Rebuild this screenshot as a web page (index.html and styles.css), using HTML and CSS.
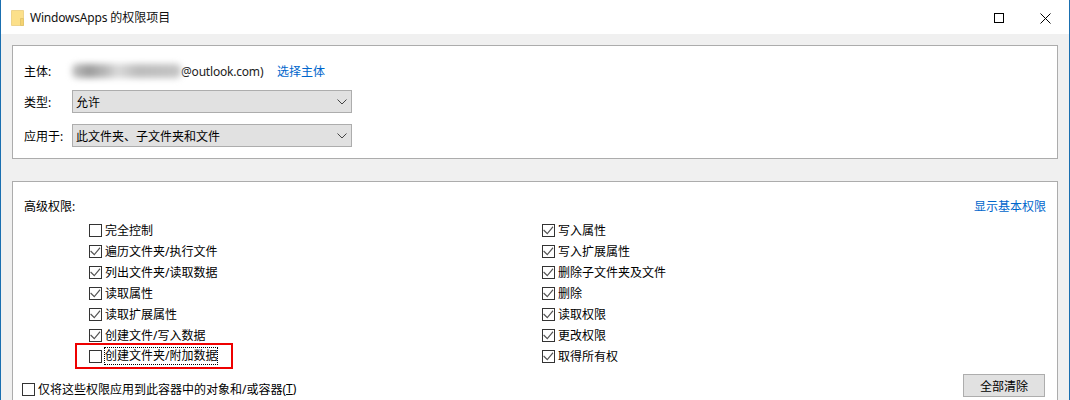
FILE: index.html
```html
<!DOCTYPE html>
<html lang="zh-CN">
<head>
<meta charset="utf-8">
<title>WindowsApps 的权限项目</title>
<link rel="stylesheet" href="styles.css">
</head>
<body>
<div class="window">
  <header class="titlebar">
    <svg class="folder" width="13" height="16" viewBox="0 0 13 16">
      <path d="M0.5 0.5H12.5V15.5H0.5Z" fill="#fce08a" stroke="#eed48c"/>
      <path d="M9.5 8.5H12.5V15.5H9.5Z" fill="#f5d372" stroke="#e4c76e"/>
    </svg>
    <span class="title"><span class="latin">WindowsApps</span> 的权限项目</span>
    <svg class="winbtn maximize" width="10" height="10" viewBox="0 0 10 10"><rect x="0.5" y="0.5" width="9" height="9" fill="none" stroke="#000"/></svg>
    <svg class="winbtn close" width="11" height="11" viewBox="0 0 11 11"><path d="M0.5 0.5L10.5 10.5M10.5 0.5L0.5 10.5" fill="none" stroke="#000" stroke-width="1"/></svg>
  </header>
  <main class="content">
    <section class="panel top">
      <div class="field owner">
        <label class="flabel">主体:</label>
        <div class="blurred"></div>
        <span class="mail">@outlook.com)</span>
        <a class="link">选择主体</a>
      </div>
      <div class="field">
        <label class="flabel">类型:</label>
        <div class="select"><span>允许</span><svg class="chev" width="10" height="6" viewBox="0 0 10 6"><path d="M0.5 0.5L5 5L9.5 0.5" fill="none" stroke="#444"/></svg></div>
      </div>
      <div class="field">
        <label class="flabel">应用于:</label>
        <div class="select"><span>此文件夹、子文件夹和文件</span><svg class="chev" width="10" height="6" viewBox="0 0 10 6"><path d="M0.5 0.5L5 5L9.5 0.5" fill="none" stroke="#444"/></svg></div>
      </div>
    </section>
    <section class="panel perms">
      <div class="permhead"><span>高级权限:</span><a class="link">显示基本权限</a></div>
      <div class="cols">
        <ul class="col left">
          <li class="item"><i class="box"></i>完全控制</li>
          <li class="item"><i class="box on"></i>遍历文件夹/执行文件</li>
          <li class="item"><i class="box on"></i>列出文件夹/读取数据</li>
          <li class="item"><i class="box on"></i>读取属性</li>
          <li class="item"><i class="box on"></i>读取扩展属性</li>
          <li class="item"><i class="box on"></i>创建文件/写入数据</li>
          <li class="item marked"><i class="box"></i><span class="focus">创建文件夹/附加数据</span><div class="redbox"></div></li>
        </ul>
        <ul class="col right">
          <li class="item"><i class="box on"></i>写入属性</li>
          <li class="item"><i class="box on"></i>写入扩展属性</li>
          <li class="item"><i class="box on"></i>删除子文件夹及文件</li>
          <li class="item"><i class="box on"></i>删除</li>
          <li class="item"><i class="box on"></i>读取权限</li>
          <li class="item"><i class="box on"></i>更改权限</li>
          <li class="item"><i class="box on"></i>取得所有权</li>
        </ul>
      </div>
      <div class="foot">
        <div class="item applyonly"><i class="box"></i>仅将这些权限应用到此容器中的对象和/或容器(<u>T</u>)</div>
        <button class="btn">全部清除</button>
      </div>
    </section>
  </main>
</div>
</body>
</html>
```
FILE: styles.css
```css
* { box-sizing: border-box; }
html, body { margin: 0; padding: 0; }
body {
  width: 1070px;
  height: 400px;
  overflow: hidden;
  font-family: "Noto Sans", "Noto Sans CJK SC", sans-serif;
  font-size: 12px;
  color: #000;
  background: #f0f0f0;
}
.window {
  width: 1070px;
  height: 400px;
  border-left: 1px solid #1a6fb0;
  border-right: 1px solid #1a6fb0;
  display: flex;
  flex-direction: column;
  overflow: hidden;
}
.titlebar {
  height: 34px;
  flex: none;
  background: #fff;
  display: flex;
  align-items: center;
  padding-left: 10px;
}
.folder { margin-right: 6px; margin-top: 2px; }
.title { flex: 1; color: #111; }
.latin { letter-spacing: -0.2px; }
.winbtn { flex: none; }
.maximize { margin-right: 36px; margin-top: 2px; }
.close { margin-right: 18px; margin-top: 3px; }
.content {
  flex: 1;
  background: #f0f0f0;
  padding: 11px 11px 0;
  display: flex;
  flex-direction: column;
  gap: 22px;
}
.panel {
  background: #fff;
  border: 1px solid #acacac;
  width: 1046px;
  flex: none;
}
.top {
  height: 114px;
  padding: 14px 11px 0;
  display: flex;
  flex-direction: column;
  gap: 11px;
}
.field {
  display: flex;
  align-items: center;
  height: 23px;
}
.owner { height: 22px; margin-bottom: -3px; }
.flabel { width: 48px; flex: none; }
.blurred {
  width: 109px;
  height: 14px;
  flex: none;
  border-radius: 5px;
  filter: blur(3px);
  background: linear-gradient(90deg, #c4c4c4 0%, #9a9a9a 15%, #bbb 32%, #dadada 42%, #bcbcbc 60%, #c4c4c4 100%);
}
.mail { color: #222; width: 96px; flex: none; letter-spacing: -0.2px; }
.link { color: #0066cc; }
.select {
  width: 280px;
  height: 23px;
  background: #e1e1e1;
  border: 1px solid #adadad;
  display: flex;
  align-items: center;
  justify-content: space-between;
  padding: 0 3px;
}
.chev { margin-right: 1px; }
.perms {
  height: 240px;
  padding: 15px 11px 0;
}
.permhead {
  display: flex;
  justify-content: space-between;
  align-items: center;
  height: 17px;
}
.cols {
  display: flex;
  margin-top: 5px;
  padding-left: 65px;
}
.col {
  list-style: none;
  margin: 0;
  padding: 0;
  width: 453px;
  display: flex;
  flex-direction: column;
}
.item {
  height: 21px;
  display: flex;
  align-items: center;
  white-space: nowrap;
  position: relative;
}
.box {
  width: 13px;
  height: 13px;
  flex: none;
  border: 1px solid #333;
  background: #fff;
  margin-right: 3px;
  margin-top: 2px;
  position: relative;
}
.box.on::after {
  content: "";
  position: absolute;
  inset: 0;
  background: #555;
  clip-path: polygon(1px 4.5px, 4.3px 7.8px, 9.6px 1.2px, 10.4px 2.2px, 4.3px 9.6px, 0.2px 5.5px);
}
.focus { outline: 1px dotted #000; outline-offset: 0; line-height: 16px; }
.redbox {
  position: absolute;
  left: -14px;
  top: -2px;
  width: 158px;
  height: 26px;
  border: 2px solid #ee0000;
  pointer-events: none;
}
.foot {
  display: flex;
  justify-content: space-between;
  align-items: flex-start;
  margin-top: 8px;
}
.applyonly { margin-top: 4px; margin-left: -2px; }
.btn {
  width: 82px;
  height: 23px;
  margin-right: 1px;
  background: #e1e1e1;
  border: 1px solid #adadad;
  font: inherit;
  padding: 0;
  color: #000;
}
```
